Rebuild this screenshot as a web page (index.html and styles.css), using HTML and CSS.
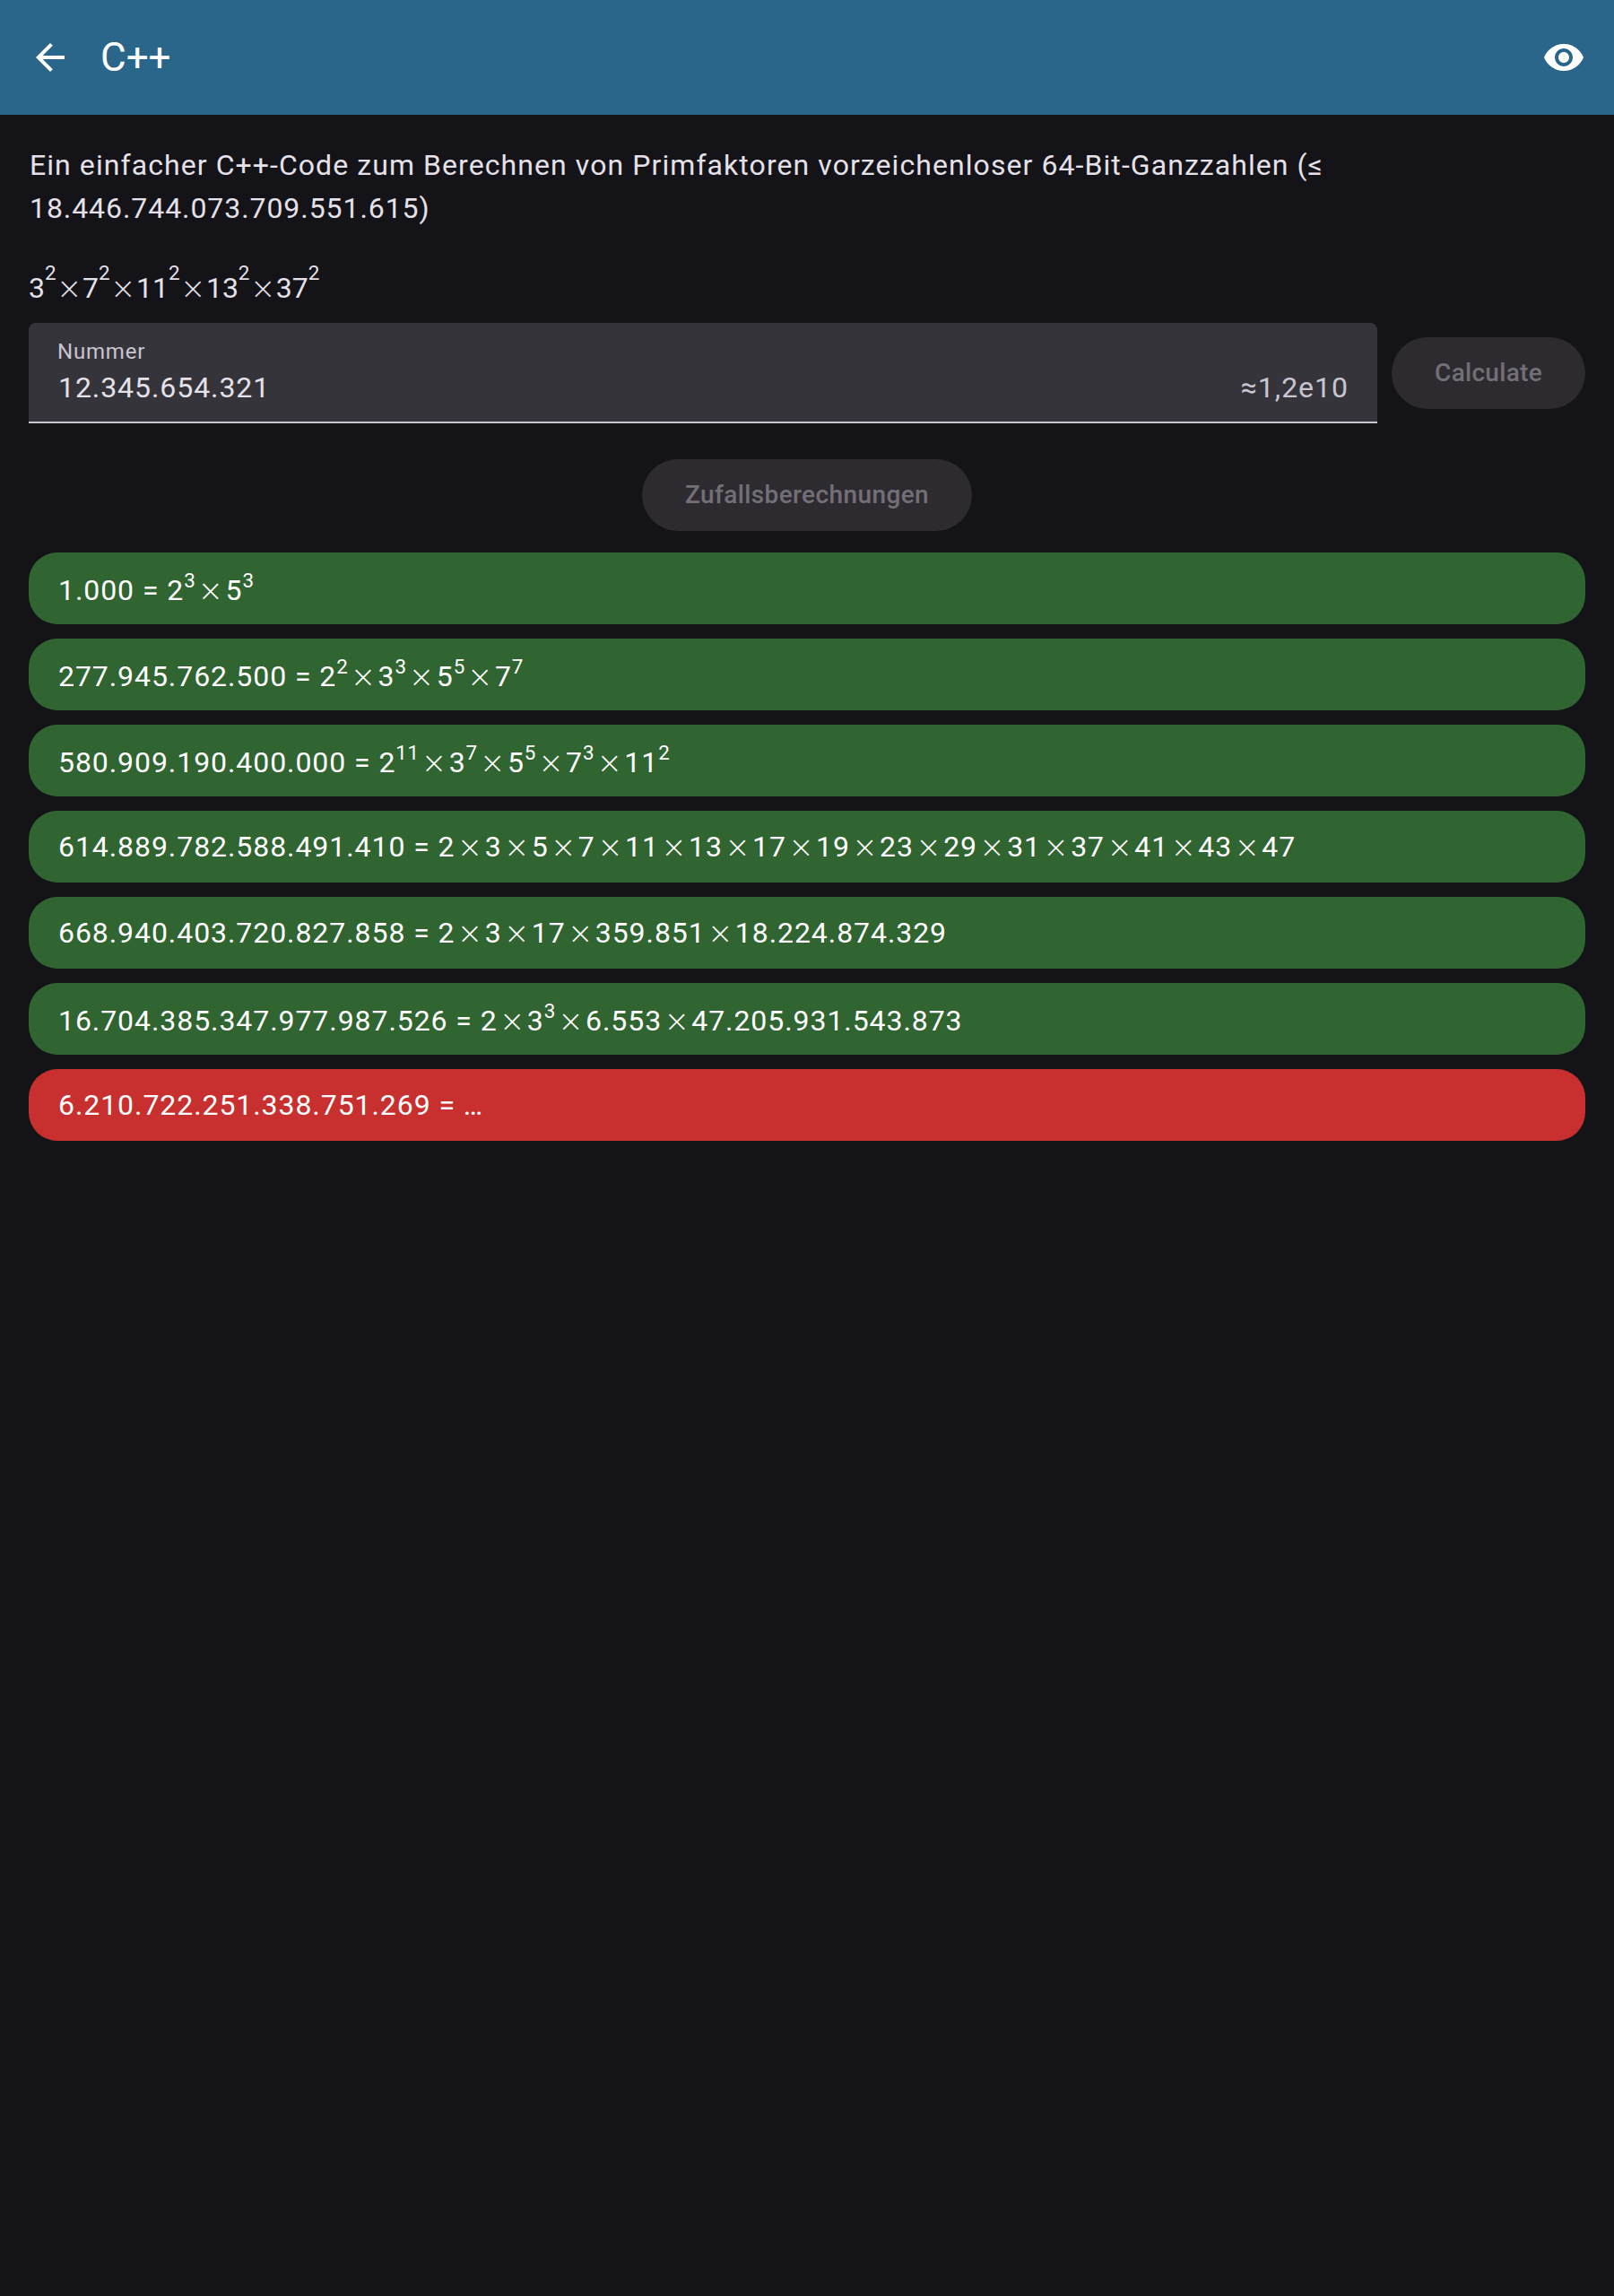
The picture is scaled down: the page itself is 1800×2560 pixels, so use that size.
FILE: index.html
```html
<!DOCTYPE html>
<html lang="de">
<head>
<meta charset="utf-8">
<title>C++</title>
<link rel="stylesheet" href="styles.css">
</head>
<body>
<header class="app-bar">
  <svg class="icon" viewBox="0 0 24 24"><path d="M20 11H7.83l5.59-5.59L12 4l-8 8 8 8 1.41-1.41L7.83 13H20z"/></svg>
  <h1 class="title">C++</h1>
  <svg class="icon" viewBox="0 0 24 24"><path d="M12 4.5C7 4.5 2.73 7.61 1 12c1.73 4.39 6 7.5 11 7.5s9.27-3.11 11-7.5c-1.73-4.39-6-7.5-11-7.5zM12 17c-2.76 0-5-2.24-5-5s2.24-5 5-5 5 2.24 5 5-2.24 5-5 5zm0-8c-1.66 0-3 1.34-3 3s1.34 3 3 3 3-1.34 3-3-1.34-3-3-3z"/></svg>
</header>
<main class="content">
  <p class="intro">Ein einfacher C++-Code zum Berechnen von Primfaktoren vorzeichenloser 64-Bit-Ganzzahlen (≤ <span class="number">18.446.744.073.709.551.615)</span></p>
  <p class="result">3<sup>2</sup><i>×</i>7<sup>2</sup><i>×</i>11<sup>2</sup><i>×</i>13<sup>2</sup><i>×</i>37<sup>2</sup></p>
  <div class="form">
    <div class="field">
      <span class="label">Nummer</span>
      <div class="value"><span class="number">12.345.654.321</span><span class="suffix">≈1,2e10</span></div>
    </div>
    <button class="button" disabled>Calculate</button>
  </div>
  <button class="button random" disabled>Zufallsberechnungen</button>
  <ul class="list">
    <li class="row">1.000 = 2<sup>3</sup><i>×</i>5<sup>3</sup></li>
    <li class="row">277.945.762.500 = 2<sup>2</sup><i>×</i>3<sup>3</sup><i>×</i>5<sup>5</sup><i>×</i>7<sup>7</sup></li>
    <li class="row">580.909.190.400.000 = 2<sup>11</sup><i>×</i>3<sup>7</sup><i>×</i>5<sup>5</sup><i>×</i>7<sup>3</sup><i>×</i>11<sup>2</sup></li>
    <li class="row plain">614.889.782.588.491.410 = 2<i>×</i>3<i>×</i>5<i>×</i>7<i>×</i>11<i>×</i>13<i>×</i>17<i>×</i>19<i>×</i>23<i>×</i>29<i>×</i>31<i>×</i>37<i>×</i>41<i>×</i>43<i>×</i>47</li>
    <li class="row plain">668.940.403.720.827.858 = 2<i>×</i>3<i>×</i>17<i>×</i>359.851<i>×</i>18.224.874.329</li>
    <li class="row">16.704.385.347.977.987.526 = 2<i>×</i>3<sup>3</sup><i>×</i>6.553<i>×</i>47.205.931.543.873</li>
    <li class="row plain pending">6.210.722.251.338.751.269 = …</li>
  </ul>
</main>
</body>
</html>
```

FILE: styles.css
```css
* { box-sizing: border-box; }

body {
  margin: 0;
  min-height: 100vh;
  background: #141318;
  color: #e5e1e9;
  font: 400 32px/48px Roboto, sans-serif;
  letter-spacing: 1px;
}

p, h1, ul { margin: 0; padding: 0; }

.app-bar {
  display: flex;
  align-items: center;
  height: 128px;
  padding: 0 32px;
  background: #2a6689;
  color: #fff;
}

.icon { width: 48px; height: 48px; fill: #fff; }

.title {
  flex: 1;
  margin-left: 32px;
  font-size: 44px;
  font-weight: 400;
  letter-spacing: 0;
}

.content {
  display: flex;
  flex-direction: column;
  padding: 32px;
}

.intro { padding-left: 1px; letter-spacing: 1.07px; }
.number { letter-spacing: 0.93px; }

.result {
  height: 48px;
  margin-top: 40px;
  padding-top: 1px;
  letter-spacing: 0;
}

sup {
  font-size: 22.4px;
  line-height: 0;
  letter-spacing: 0.5px;
  vertical-align: 14px;
}

i {
  display: inline-block;
  width: 33.2px;
  line-height: 24px;
  vertical-align: -1px;
  font-family: "DejaVu Sans", sans-serif;
  font-size: 34px;
  font-weight: 200;
  font-style: normal;
  letter-spacing: 0;
  text-align: center;
}

.result sup { vertical-align: 20px; letter-spacing: 0; }
.result i { width: 29.4px; }

.form { display: flex; align-items: center; gap: 16px; margin-top: 16px; }

.field {
  flex: 1;
  height: 112px;
  padding: 16px 32px 0;
  border-bottom: 2px solid #c9c5d0;
  border-radius: 8px 8px 0 0;
  background: #36343b;
}

.label {
  display: block;
  color: #c9c5d0;
  font-size: 24px;
  line-height: 32px;
  letter-spacing: 0.8px;
}

.value { display: flex; justify-content: space-between; padding-left: 1px; }
.suffix { color: #c9c5d0; }

.button {
  height: 80px;
  padding: 0 48px;
  border: 0;
  border-radius: 40px;
  background: #2e2b30;
  color: #727076;
  font: 500 28px/40px Roboto, sans-serif;
  letter-spacing: 0.3px;
}

.random { align-self: center; margin-top: 40px; letter-spacing: 0.4px; }

.list {
  display: flex;
  flex-direction: column;
  gap: 16px;
  margin-top: 24px;
  list-style: none;
}

.row {
  height: 80px;
  padding: 18px 32px 0 33px;
  border-radius: 32px;
  background: #306430;
  color: #fff;
  letter-spacing: 0.93px;
  white-space: nowrap;
}

.plain { padding-top: 16px; }
.pending { background: #c8302f; }
```
